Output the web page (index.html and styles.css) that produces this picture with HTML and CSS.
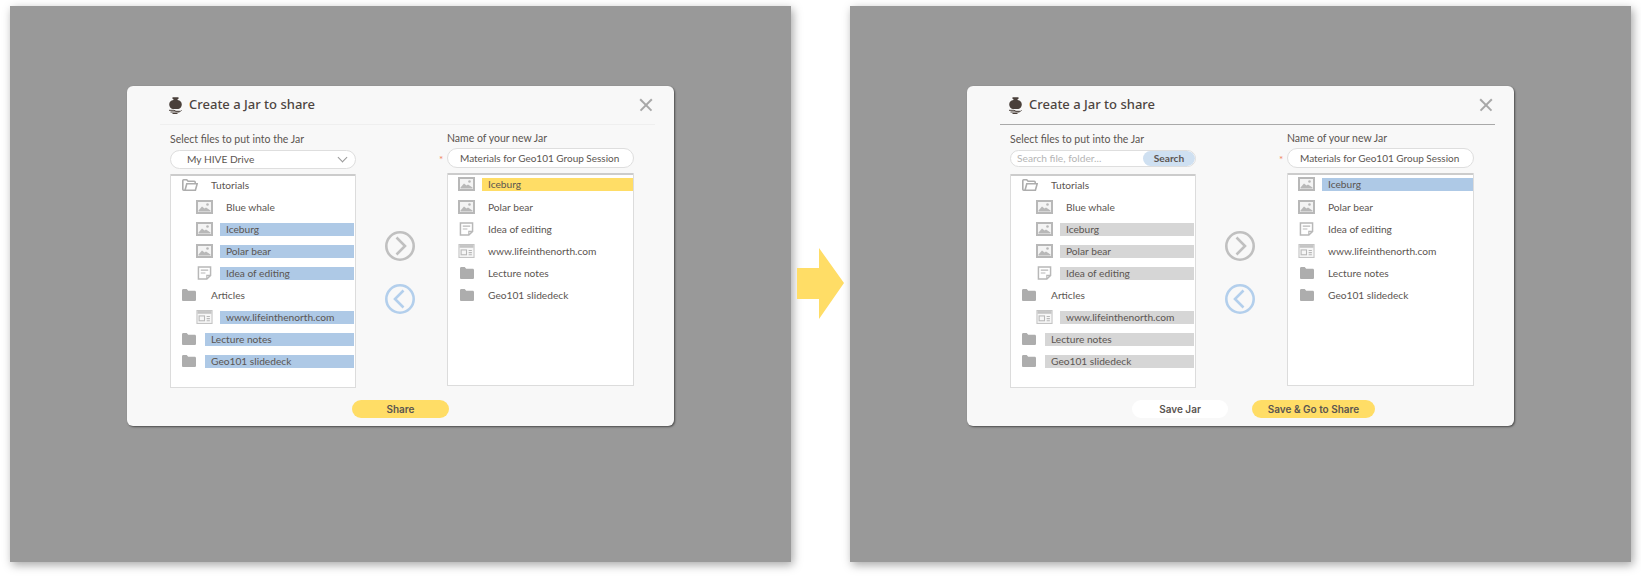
FILE: index.html
```html
<!DOCTYPE html>
<html>
<head>
    <title>Create a Jar to share</title>
    <link rel="stylesheet" href="styles.css">
</head>
<body>
    <svg class="defs">
        <symbol id="i-jar" viewBox="0 0 13 17">
            <path fill="#4a403b" d="M3.5 .3h6v1.8H8.6V3c2.6.5 4.2 2 4.2 4.5 0 2.3-1.5 4-3.5 4.5H3.7C1.7 11.500.2 9.8.2 7.5.2 5 1.8 3.500 4.400 3v-.9h-.9z"/>
            <path fill="none" stroke="#4a403b" stroke-width="1" d="M0 13.300h5l2 1h4.500l1-1M1.500 15h9M3.500 16.500h5"/>
        </symbol>
        <symbol id="i-image" viewBox="0 0 17 14">
            <rect x="1" y="1" width="15" height="12" fill="#f4f4f4" stroke="#b8b8b8" stroke-width="2"/>
            <path fill="#b8b8b8" d="M2.500 11.500V10.500L6 6.500l2.500 2 1.500-1 4.500 3v1z"/>
            <circle cx="11.500" cy="4.500" r="1.300" fill="#b8b8b8"/>
        </symbol>
        <symbol id="i-note" viewBox="0 0 15 15">
            <path fill="#fff" stroke="#b8b8b8" stroke-width="1.600" d="M1 1h13v9l-4 4H1z"/>
            <path fill="none" stroke="#b8b8b8" stroke-width="1.300" d="M3.500 4.500h8M3.500 7.500h5M10 14v-4h4"/>
        </symbol>
        <symbol id="i-web" viewBox="0 0 15 13">
            <rect x=".5" y=".5" width="14" height="12" fill="#f6f6f6" stroke="#c4c4c4"/>
            <rect x="1" y="1" width="13" height="2.500" fill="#c4c4c4"/>
            <rect x="2.500" y="5.500" width="5" height="4.500" fill="none" stroke="#b8b8b8"/>
            <path fill="none" stroke="#b8b8b8" d="M9.500 6h3M9.500 8h3M9.500 10h3"/>
        </symbol>
        <symbol id="i-folder" viewBox="0 0 14 12">
            <path fill="#adadad" d="M0 1.500C0 .7.500 0 1.300 0h3.400l1.500 1.800h6.500c.7 0 1.300.6 1.300 1.300v7.600c0 .7-.6 1.300-1.300 1.300H1.300C.5 12 0 11.400 0 10.700z"/>
        </symbol>
        <symbol id="i-open" viewBox="0 0 16 12">
            <path fill="none" stroke="#adadad" stroke-width="1.600" d="M3 11.200H1.700c-.6 0-.9-.5-.9-1V1.700c0-.6.3-.9.9-.9h3l1.400 1.500h6.200c.6 0 .9.400.9.900v1.400M3 11.200l1.800-6.500h10.400l-1.800 6.500z"/>
        </symbol>
        <symbol id="i-right" viewBox="0 0 30 30">
            <circle cx="15" cy="15" r="13.700" fill="none" stroke="currentColor" stroke-width="2.600"/>
            <path fill="none" stroke="currentColor" stroke-width="2.600" d="M11.500 6.500L20 15l-8.500 8.500"/>
        </symbol>
        <symbol id="i-left" viewBox="0 0 30 30">
            <circle cx="15" cy="15" r="13.700" fill="none" stroke="currentColor" stroke-width="2.600"/>
            <path fill="none" stroke="currentColor" stroke-width="2.600" d="M18.500 6.500L10 15l8.500 8.500"/>
        </symbol>
    </svg>

    <div class="screen">
        <div class="dialog">
            <div class="dialog-head">
                <svg class="jar-icon"><use href="#i-jar"/></svg>
                <span class="dialog-title">Create a Jar to share</span>
                <span class="close"></span>
            </div>
            <div class="dialog-body">
                <div class="col col-left">
                    <div class="field-label">Select files to put into the Jar</div>
                    <div class="pill select">My HIVE Drive<span class="chevron"></span></div>
                    <div class="list">
                        <div class="row lvl0"><svg class="ico ico-open"><use href="#i-open"/></svg><span class="name">Tutorials</span></div>
                        <div class="row lvl1"><svg class="ico"><use href="#i-image"/></svg><span class="name">Blue whale</span></div>
                        <div class="row lvl1"><svg class="ico"><use href="#i-image"/></svg><span class="name picked">Iceburg</span></div>
                        <div class="row lvl1"><svg class="ico"><use href="#i-image"/></svg><span class="name picked">Polar bear</span></div>
                        <div class="row lvl1"><svg class="ico"><use href="#i-note"/></svg><span class="name picked">Idea of editing</span></div>
                        <div class="row lvl0"><svg class="ico ico-folder"><use href="#i-folder"/></svg><span class="name">Articles</span></div>
                        <div class="row lvl1"><svg class="ico"><use href="#i-web"/></svg><span class="name picked">www.lifeinthenorth.com</span></div>
                        <div class="row lvl0"><svg class="ico ico-folder"><use href="#i-folder"/></svg><span class="name picked">Lecture notes</span></div>
                        <div class="row lvl0"><svg class="ico ico-folder"><use href="#i-folder"/></svg><span class="name picked">Geo101 slidedeck</span></div>
                    </div>
                </div>
                <div class="arrows">
                    <svg class="arrow arrow-grey"><use href="#i-right"/></svg>
                    <svg class="arrow arrow-blue"><use href="#i-left"/></svg>
                </div>
                <div class="col col-right">
                    <div class="field-label">Name of your new Jar</div>
                    <div class="pill jar-name"><span class="star">*</span>Materials for Geo101 Group Session</div>
                    <div class="list list-short">
                        <div class="row"><svg class="ico"><use href="#i-image"/></svg><span class="name current">Iceburg</span></div>
                        <div class="row"><svg class="ico"><use href="#i-image"/></svg><span class="name">Polar bear</span></div>
                        <div class="row"><svg class="ico"><use href="#i-note"/></svg><span class="name">Idea of editing</span></div>
                        <div class="row"><svg class="ico"><use href="#i-web"/></svg><span class="name">www.lifeinthenorth.com</span></div>
                        <div class="row"><svg class="ico ico-folder"><use href="#i-folder"/></svg><span class="name">Lecture notes</span></div>
                        <div class="row"><svg class="ico ico-folder"><use href="#i-folder"/></svg><span class="name">Geo101 slidedeck</span></div>
                    </div>
                </div>
            </div>
            <div class="dialog-foot">
                <button class="btn btn-yellow btn-share">Share</button>
            </div>
        </div>
    </div>

    <svg class="big-arrow" viewBox="0 0 47 71"><path d="M0 20h22V0l25 35-25 36V51H0z"/></svg>

    <div class="screen">
        <div class="dialog dialog-save">
            <div class="dialog-head">
                <svg class="jar-icon"><use href="#i-jar"/></svg>
                <span class="dialog-title">Create a Jar to share</span>
                <span class="close"></span>
            </div>
            <div class="dialog-body">
                <div class="col col-left">
                    <div class="field-label">Select files to put into the Jar</div>
                    <div class="pill search">
                        <span class="search-hint">Search file, folder...</span>
                        <span class="search-btn">Search</span>
                    </div>
                    <div class="list">
                        <div class="row lvl0"><svg class="ico ico-open"><use href="#i-open"/></svg><span class="name">Tutorials</span></div>
                        <div class="row lvl1"><svg class="ico"><use href="#i-image"/></svg><span class="name">Blue whale</span></div>
                        <div class="row lvl1"><svg class="ico"><use href="#i-image"/></svg><span class="name picked">Iceburg</span></div>
                        <div class="row lvl1"><svg class="ico"><use href="#i-image"/></svg><span class="name picked">Polar bear</span></div>
                        <div class="row lvl1"><svg class="ico"><use href="#i-note"/></svg><span class="name picked">Idea of editing</span></div>
                        <div class="row lvl0"><svg class="ico ico-folder"><use href="#i-folder"/></svg><span class="name">Articles</span></div>
                        <div class="row lvl1"><svg class="ico"><use href="#i-web"/></svg><span class="name picked">www.lifeinthenorth.com</span></div>
                        <div class="row lvl0"><svg class="ico ico-folder"><use href="#i-folder"/></svg><span class="name picked">Lecture notes</span></div>
                        <div class="row lvl0"><svg class="ico ico-folder"><use href="#i-folder"/></svg><span class="name picked">Geo101 slidedeck</span></div>
                    </div>
                </div>
                <div class="arrows">
                    <svg class="arrow arrow-grey"><use href="#i-right"/></svg>
                    <svg class="arrow arrow-blue"><use href="#i-left"/></svg>
                </div>
                <div class="col col-right">
                    <div class="field-label">Name of your new Jar</div>
                    <div class="pill jar-name"><span class="star">*</span>Materials for Geo101 Group Session</div>
                    <div class="list list-short">
                        <div class="row"><svg class="ico"><use href="#i-image"/></svg><span class="name current">Iceburg</span></div>
                        <div class="row"><svg class="ico"><use href="#i-image"/></svg><span class="name">Polar bear</span></div>
                        <div class="row"><svg class="ico"><use href="#i-note"/></svg><span class="name">Idea of editing</span></div>
                        <div class="row"><svg class="ico"><use href="#i-web"/></svg><span class="name">www.lifeinthenorth.com</span></div>
                        <div class="row"><svg class="ico ico-folder"><use href="#i-folder"/></svg><span class="name">Lecture notes</span></div>
                        <div class="row"><svg class="ico ico-folder"><use href="#i-folder"/></svg><span class="name">Geo101 slidedeck</span></div>
                    </div>
                </div>
            </div>
            <div class="dialog-foot">
                <button class="btn btn-white">Save Jar</button>
                <button class="btn btn-yellow btn-go">Save &amp; Go to Share</button>
            </div>
        </div>
    </div>
</body>
</html>
```

FILE: styles.css
```css
body {
    margin: 0;
    height: 576px;
    padding: 6px 10px 0;
    box-sizing: border-box;
    display: flex;
    align-items: flex-start;
    background-color: #fff;
    font-family: Lato, sans-serif;
    color: #5b5551;
    overflow: hidden;
}

.defs {
    display: none;
}

.screen {
    flex: none;
    width: 781px;
    height: 556px;
    padding: 80px 0 0 117px;
    box-sizing: border-box;
    background-color: #999;
    box-shadow: 2px 3px 9px rgba(0, 0, 0, 0.35);
}

.big-arrow {
    flex: none;
    width: 47px;
    height: 71px;
    margin: 242px 6px 0;
    fill: #ffdd66;
}

.dialog {
    width: 547px;
    height: 340px;
    background-color: #f8f8f8;
    border-radius: 6px;
    box-shadow: 1px 1px 2px rgba(0, 0, 0, 0.5);
}

.dialog-head {
    display: flex;
    align-items: center;
    height: 38px;
    margin: 0 19px 0 33px;
    padding-left: 9px;
    border-bottom: 1px solid #efefef;
}

.dialog-save .dialog-head {
    border-bottom-color: #a9a9a9;
}

.jar-icon {
    width: 13px;
    height: 17px;
    margin-right: 7px;
}

.dialog-title {
    flex: 1;
    margin-bottom: 2px;
    font-family: "Noto Sans", sans-serif;
    font-size: 13px;
    font-weight: 500;
    color: #4d4541;
}

/* the x in the corner */
.close {
    position: relative;
    width: 12px;
    height: 12px;
    margin-right: 3px;
}

.close::before,
.close::after {
    content: "";
    position: absolute;
    left: -2px;
    top: 5px;
    width: 16px;
    height: 1.5px;
    background-color: #a8a8a8;
    transform: rotate(45deg);
}

.close::after {
    transform: rotate(-45deg);
}

.dialog-body {
    display: flex;
    padding: 6px 0 0 43px;
}

.col-left {
    width: 186px;
    padding-top: 1px;
}

.col-right {
    width: 187px;
}

.field-label {
    font-size: 10.5px;
    line-height: 14px;
}

.pill {
    box-sizing: border-box;
    font-size: 10.2px;
    background-color: #fff;
    border: 1px solid #dedede;
    border-radius: 10px;
}

.select {
    position: relative;
    height: 19px;
    margin-top: 4px;
    padding-left: 16px;
    line-height: 17px;
}

.chevron {
    position: absolute;
    right: 9px;
    top: 3px;
    width: 6px;
    height: 6px;
    border-right: 1.5px solid #999;
    border-bottom: 1.5px solid #999;
    transform: rotate(45deg);
}

.search {
    display: flex;
    justify-content: space-between;
    height: 17px;
    margin: 4px 0 7px;
    overflow: hidden;
    line-height: 15px;
}

.search-hint {
    padding-left: 6px;
    color: #b5b5b5;
}

.search-btn {
    width: 52px;
    text-align: center;
    font-weight: 700;
    background-color: #cfe0f1;
    border-radius: 8px;
}

.jar-name {
    position: relative;
    height: 20px;
    margin-top: 3px;
    padding-left: 12px;
    font-size: 10px;
    line-height: 18px;
    white-space: nowrap;
}

.star {
    position: absolute;
    left: -9px;
    top: 1px;
    color: #f0845c;
}

.list {
    box-sizing: border-box;
    height: 214px;
    margin-top: 5px;
    background-color: #fff;
    border: 1px solid #dcdcdc;
    border-top: none;
    box-shadow: inset 0 2px 0 #cccccc;
}

.search + .list {
    margin-top: 0;
}

.list-short {
    height: 213px;
}

.row {
    display: flex;
    align-items: center;
    height: 22px;
    padding-left: 10px;
    font-size: 10.2px;
}

.row:first-child {
    margin-bottom: 1px;
}

.col-left .row:first-child {
    margin-bottom: 0;
}

.lvl0 {
    padding-left: 11px;
}

.lvl1 {
    padding-left: 25px;
}

.ico {
    flex: none;
    width: 17px;
    height: 14px;
    margin-right: 7px;
}

.ico-folder,
.ico-open {
    width: 14px;
    height: 12px;
    margin-right: 9px;
}

.ico-open {
    width: 16px;
    margin-right: 7px;
}

.col-right .ico-folder {
    margin-left: 2px;
    margin-right: 8px;
}

.name {
    flex: 1;
    margin-right: 1px;
    padding-left: 6px;
    line-height: 13px;
}

.col-right .name {
    margin-right: 0;
}

.picked {
    background-color: #aec9e6;
}

.dialog-save .picked {
    background-color: #d6d6d6;
}

.current {
    background-color: #ffdd66;
}

.dialog-save .current {
    background-color: #aec9e6;
}

.arrows {
    width: 91px;
    box-sizing: border-box;
    padding: 100px 3px 0 0;
    display: flex;
    flex-direction: column;
    align-items: center;
    gap: 23px;
}

.arrow {
    width: 30px;
    height: 30px;
}

.arrow-grey {
    color: #c0c0c0;
}

.arrow-blue {
    color: #b3cfec;
}

.dialog-foot {
    display: flex;
    justify-content: center;
    gap: 24px;
    margin-top: 12px;
}

.dialog-save .dialog-foot {
    padding-left: 26px;
}

.btn {
    height: 18px;
    padding: 0;
    font-family: Inter, sans-serif;
    font-size: 10px;
    font-weight: 600;
    color: #5b5551;
    border: none;
    border-radius: 9px;
}

.btn-yellow {
    background-color: #ffdd66;
}

.btn-white {
    width: 96px;
    background-color: #fff;
}

.btn-share {
    width: 97px;
}

.btn-go {
    width: 123px;
}
```
